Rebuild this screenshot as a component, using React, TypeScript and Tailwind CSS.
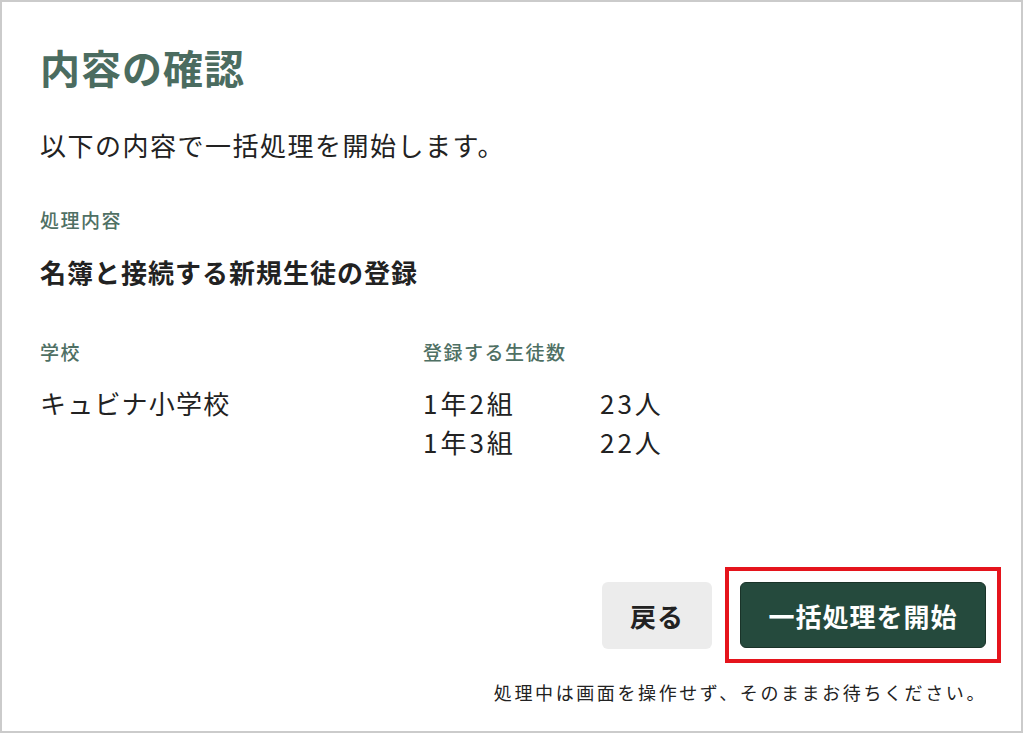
export default function App() {
  const classes = [
    { name: "1年2組", count: "23人" },
    { name: "1年3組", count: "22人" },
  ];

  return (
    <div
      className="w-[1023px] h-[733px] bg-white border-2 border-[#cbcbcb] flex flex-col pl-[38px] pr-[20px] text-[#222222]"
      style={{ fontFamily: '"Noto Sans CJK JP", "Noto Sans", sans-serif' }}
    >
      <h1 className="mt-[41px] text-[40px] leading-[48px] font-bold tracking-[1px] text-[#4b6c60]">
        内容の確認
      </h1>
      <p className="mt-[36px] text-[26px] leading-[36px] tracking-[1.5px]">
        以下の内容で一括処理を開始します。
      </p>

      <div className="mt-[44px] text-[19px] leading-[26px] font-medium tracking-[1.5px] text-[#4f7064]">
        処理内容
      </div>
      <div className="mt-[21px] text-[26px] leading-[36px] font-bold tracking-[1px]">
        名簿と接続する新規生徒の登録
      </div>

      <div className="mt-[49px] flex">
        <div className="w-[383px]">
          <div className="text-[19px] leading-[26px] font-medium tracking-[1.5px] text-[#4f7064]">
            学校
          </div>
          <div className="mt-[18px] text-[26px] leading-[39px] tracking-[1.2px]">
            キュビナ小学校
          </div>
        </div>
        <div>
          <div className="text-[19px] leading-[26px] font-medium tracking-[1.5px] text-[#4f7064]">
            登録する生徒数
          </div>
          <div className="mt-[18px] flex flex-col">
            {classes.map((c) => (
              <div key={c.name} className="flex text-[26px] leading-[39px] tracking-[3px]">
                <span className="w-[177px]">{c.name}</span>
                <span>{c.count}</span>
              </div>
            ))}
          </div>
        </div>
      </div>

      <div className="flex-1" />

      <div className="flex items-center justify-end">
        <button className="w-[110px] h-[67px] rounded-[6px] bg-[#ececec] text-[26px] font-bold tracking-[1px] text-[#222222]">
          戻る
        </button>
        <div className="ml-[13px] border-4 border-[#e5141c] p-[11px]">
          <button className="w-[246px] h-[66px] rounded-[6px] bg-[#254a3d] border border-[#1a3329] text-[26px] font-bold tracking-[1px] text-white">
            一括処理を開始
          </button>
        </div>
      </div>

      <p className="mt-[16px] mb-[26px] mr-[14px] text-right text-[18px] leading-[26px] tracking-[2.6px]">
        処理中は画面を操作せず、そのままお待ちください。
      </p>
    </div>
  );
}
